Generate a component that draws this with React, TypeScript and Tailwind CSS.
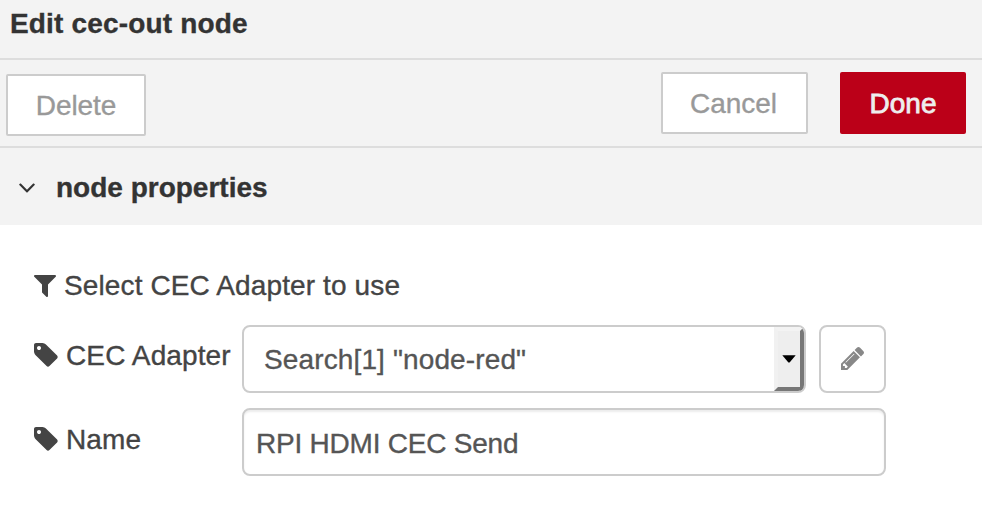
import type { ReactNode } from "react";

type IconProps = { className: string; viewBox: string; d: string };

function Icon({ className, viewBox, d }: IconProps) {
  return (
    <svg className={className} viewBox={viewBox} fill="currentColor" aria-hidden="true">
      <path d={d} />
    </svg>
  );
}

function TagIcon() {
  return (
    <Icon
      className="mr-[8px] h-[24px] w-[24px] shrink-0"
      viewBox="0 128 1536 1536"
      d="M448 448q0-53-37.500-90.500t-90.500-37.500-90.500 37.500-37.500 90.500 37.500 90.500 90.500 37.500 90.500-37.500 37.500-90.500zm1067 576q0 53-37 90l-491 492q-39 37-91 37-53 0-90-37l-715-716q-38-37-64.500-101t-26.500-117v-416q0-52 38-90t90-38h416q53 0 117 26.500t102 64.500l715 714q37 39 37 91z"
    />
  );
}

function Label({ children }: { children: ReactNode }) {
  return (
    <label className="flex h-[32px] w-[208px] shrink-0 items-center">
      <TagIcon />
      <span className="pt-[2px] tracking-[0.12px]">{children}</span>
    </label>
  );
}

export default function App() {
  return (
    <div className="h-[528px] w-[982px] overflow-hidden whitespace-nowrap bg-white font-['Liberation_Sans',Arial,sans-serif] text-[28px] leading-[32px] text-[#444] [-webkit-text-stroke:0.35px_currentColor]">
      <header className="h-[60px] border-b-2 border-[#ddd] bg-[#f3f3f3] pl-[10px] pt-[8px] font-bold tracking-[0.17px] text-[#333]">
        Edit cec-out node
      </header>

      <div className="flex h-[88px] items-start border-b-2 border-[#ddd] bg-[#f3f3f3] pl-[6px] pr-[16px] pt-[12px]">
        <button className="mt-[2px] h-[62px] w-[140px] rounded-[2px] border-2 border-[#ccc] bg-white pt-[2px] tracking-[-0.1px] text-[#999]">
          Delete
        </button>
        <button className="ml-auto h-[62px] w-[147px] rounded-[2px] border-2 border-[#ccc] bg-white pr-[2px] pt-[2px] text-[#999]">
          Cancel
        </button>
        <button className="ml-[32px] h-[62px] w-[126px] rounded-[2px] bg-[#bb0018] pt-[2px] text-[#eee] [-webkit-text-stroke:0.8px_#eee]">
          Done
        </button>
      </div>

      <div className="flex h-[77px] items-center bg-[#f3f3f3] pl-[19px] font-bold text-[#333]">
        <Icon
          className="mr-[21px] mt-[2px] h-[10px] w-[16px]"
          viewBox="387 643 1018 602"
          d="M1395 736q0 13-10 23l-466 466q-10 10-23 10t-23-10l-466-466q-10-10-10-23t10-23l50-50q10-10 23-10t23 10l393 393 393-393q10-10 23-10t23 10l50 50q10 10 10 23z"
        />
        <span className="pt-[2px]">node properties</span>
      </div>

      <main className="pl-[34px] pt-[45px]">
        <div className="flex h-[32px] items-center">
          <Icon
            className="mr-[8px] h-[22px] w-[22px]"
            viewBox="192 256 1408 1408"
            d="M1595 295q17 41-14 70l-493 493v742q0 42-39 59-13 5-25 5-27 0-45-19l-256-256q-19-19-19-45v-486l-493-493q-31-29-14-70 17-39 59-39h1280q42 0 59 39z"
          />
          <span className="tracking-[0.12px]">Select CEC Adapter to use</span>
        </div>

        <div className="mt-[23px] flex h-[68px]">
          <div className="pt-[14px]">
            <Label>CEC Adapter</Label>
          </div>
          <div className="flex h-[68px] w-[564px] overflow-hidden rounded-[8px] border-2 border-[#ccc] text-[#555]">
            <span className="flex-1 pl-[20px] pt-[17px] tracking-[0.13px]">Search[1] "node-red"</span>
            <span className="flex h-[64px] w-[30px] items-center justify-center border-4 border-b-[#777] border-l-[#f1f1f1] border-r-[#777] border-t-[#f3f3f3] bg-[#eee]">
              <svg className="h-[8px] w-[14px] shrink-0" viewBox="0 0 14 8" aria-hidden="true">
                <path d="M0.300 0.200h13.400L7.600 7.600h-1.200z" fill="#000" />
              </svg>
            </span>
          </div>
          <button className="ml-[13px] flex h-[68px] w-[67px] items-center justify-center rounded-[8px] border-2 border-[#ccc] bg-white pb-[1px] text-[#888]">
            <Icon
              className="h-[23px] w-[23px]"
              viewBox="128 149 1515 1515"
              d="M491 1536l91-91-235-235-91 91v107h128v128h107zm523-928q0-22-22-22-10 0-17 7l-542 542q-7 7-7 17 0 22 22 22 10 0 17-7l542-542q7-7 7-17zm-54-192l416 416-832 832h-416v-416zm683 96q0 53-37 90l-166 166-416-416 166-165q36-38 90-38 53 0 91 38l235 234q37 39 37 91z"
            />
          </button>
        </div>

        <div className="mt-[15px] flex h-[68px]">
          <div className="pt-[15px]">
            <Label>Name</Label>
          </div>
          <div className="h-[68px] w-[644px] rounded-[8px] border-2 border-[#ccc] pl-[12px] pt-[18px] tracking-[-0.22px] text-[#555] shadow-[inset_0_2px_2px_rgba(0,0,0,0.075)]">
            RPI HDMI CEC Send
          </div>
        </div>
      </main>
    </div>
  );
}
